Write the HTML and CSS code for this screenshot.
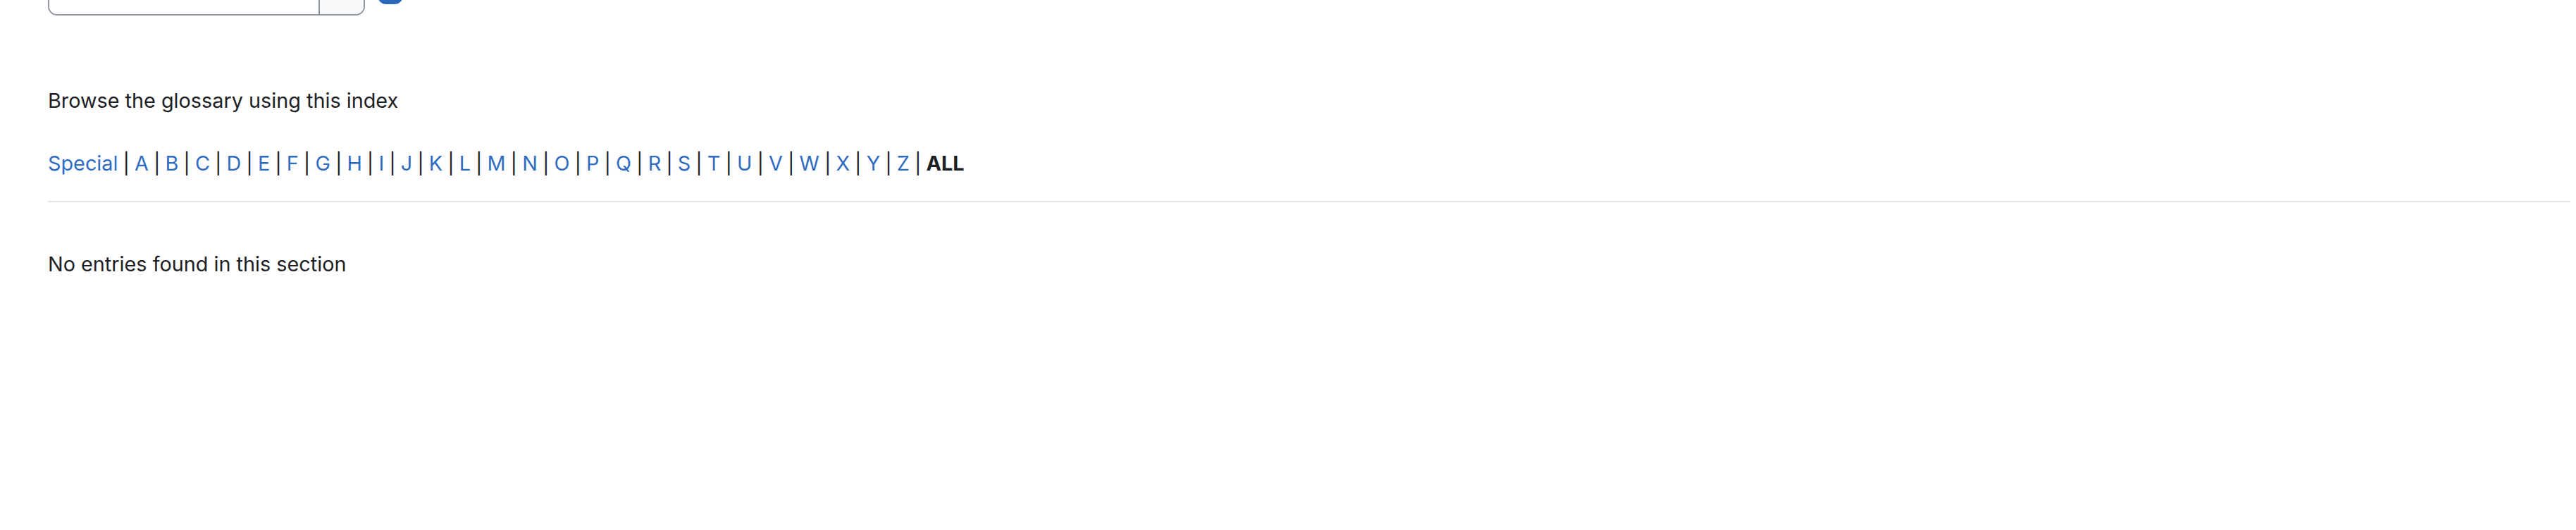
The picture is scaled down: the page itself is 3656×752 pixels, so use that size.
FILE: index.html
```html
<!DOCTYPE html>
<html lang="en">
<head>
<meta charset="utf-8">
<title>Glossary</title>
<link rel="stylesheet" href="styles.css">
</head>
<body>
<div class="page">
  <form class="search-row">
    <div class="input-group">
      <input class="search-input" type="text" aria-label="Search">
      <button class="search-btn" type="button" aria-label="Search">
        <svg width="26" height="26" viewBox="0 0 16 16"><circle cx="6.5" cy="6.5" r="5" fill="none" stroke="#1d2125" stroke-width="1.8"/><path d="M10.2 10.2 L15 15" stroke="#1d2125" stroke-width="2" stroke-linecap="round"/></svg>
      </button>
    </div>
    <span class="check"></span>
  </form>

  <p class="browse">Browse the glossary using this index</p>

  <div class="letters"><a href="#">Special</a> | <a href="#">A</a> | <a href="#">B</a> | <a href="#">C</a> | <a href="#">D</a> | <a href="#">E</a> | <a href="#">F</a> | <a href="#">G</a> | <a href="#">H</a> | <a href="#">I</a> | <a href="#">J</a> | <a href="#">K</a> | <a href="#">L</a> | <a href="#">M</a> | <a href="#">N</a> | <a href="#">O</a> | <a href="#">P</a> | <a href="#">Q</a> | <a href="#">R</a> | <a href="#">S</a> | <a href="#">T</a> | <a href="#">U</a> | <a href="#">V</a> | <a href="#">W</a> | <a href="#">X</a> | <a href="#">Y</a> | <a href="#">Z</a> | <b>ALL</b></div>

  <hr class="rule">

  <p class="empty">No entries found in this section</p>
</div>
</body>
</html>
```

FILE: styles.css
```css
html, body {
  margin: 0;
  padding: 0;
  background: #fff;
}
body {
  font-family: Inter, Roboto, "Liberation Sans", Arial, sans-serif;
  font-size: 28.8px;
  line-height: 42px;
  color: #1d2125;
}
.page {
  padding: 0 8px 0 68px;
}
.search-row {
  display: flex;
  align-items: flex-end;
  gap: 18px;
  margin: -50px 0 0 0;
}
.input-group {
  display: flex;
  width: 450px;
  height: 72px;
  box-sizing: border-box;
  border: 2px solid #8f959e;
  border-radius: 13px;
  overflow: hidden;
}
.search-input {
  flex: 1;
  min-width: 0;
  border: 0;
  margin: 0;
  padding: 0 16px;
  font: inherit;
  background: #fff;
  outline: none;
}
.search-btn {
  width: 64px;
  flex: none;
  border: 0;
  border-left: 2px solid #8f959e;
  background: #f8f9fa;
  margin: 0;
  padding: 0 0 46px 0;
  display: flex;
  align-items: flex-end;
  justify-content: center;
}
.check {
  display: block;
  width: 36px;
  height: 36px;
  border-radius: 12px;
  background: #2d68ba;
  margin-bottom: 16px;
}
.browse {
  margin: 100px 0 0 0;
}
.letters {
  margin-top: 47px;
  word-spacing: -1.1px;
}
.letters a {
  color: #2f6bbf;
  text-decoration: none;
}
.letters b {
  font-weight: 700;
  color: #1d2125;
}
.rule {
  margin: 32px 0 0 0;
  border: 0;
  border-top: 2px solid #e6e6e6;
  height: 0;
}
.empty {
  margin: 67px 0 0 0;
}
```
